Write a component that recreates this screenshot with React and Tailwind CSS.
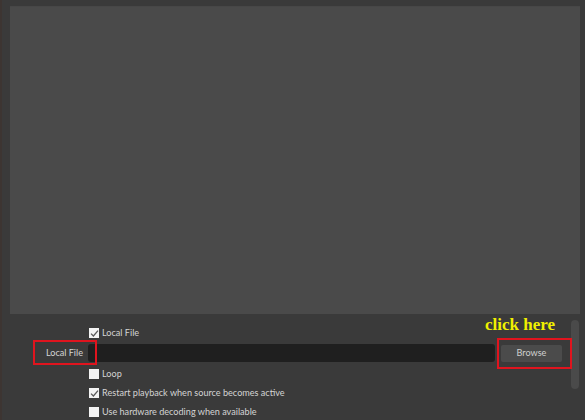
import React from "react";

function Check({ checked }) {
  return (
    <div className="w-[10px] h-[10px] bg-[#f3f3f3] flex items-center justify-center shrink-0">
      {checked && (
        <svg width="9" height="9" viewBox="0 0 9 9">
          <path d="M1 4.6 L3.4 7 L8 1.6" fill="none" stroke="#5a5a5a" strokeWidth="1.3" />
        </svg>
      )}
    </div>
  );
}

function CheckRow({ checked, label, mt }) {
  return (
    <div className={`flex items-center h-[18px] pl-[89px] gap-[3px] ${mt}`}>
      <Check checked={checked} />
      <span className="text-[#d4d4d4]">{label}</span>
    </div>
  );
}

export default function App() {
  return (
    <div
      className="relative w-[585px] h-[420px] bg-[#3a3a3a] overflow-hidden flex flex-col text-[9.1px]"
      style={{ fontFamily: 'Lato, "Open Sans", sans-serif' }}
    >
      <div className="absolute left-0 top-0 w-[2px] h-full bg-[#3d3532]" />
      <div className="mt-[6px] ml-[10px] w-[570px] h-[308px] bg-[#4a4a4a] border-t border-[#474747] shrink-0" />
      <div className="flex flex-1">
        <div className="flex flex-col flex-1 pt-[10px]">
          <CheckRow checked label="Local File" mt="" />
          <div className="flex items-center h-[18px] mt-[2px]">
            <div className="w-[83px] text-right text-[#d4d4d4] pr-0">Local File</div>
            <div className="ml-[5px] w-[407px] h-[18px] bg-[#1f1f1f] rounded-[3px]" />
            <div className="ml-[6px] w-[61px] h-[17px] bg-[#4b4b4b] rounded-[2px] flex items-center justify-center text-[#d0d0d0]">
              Browse
            </div>
          </div>
          <CheckRow label="Loop" mt="mt-[3px]" />
          <CheckRow checked label="Restart playback when source becomes active" mt="mt-[1px]" />
          <CheckRow label="Use hardware decoding when available" mt="mt-[1px]" />
        </div>
        <div className="w-[14px] pt-[6px] pr-[6px]">
          <div className="w-[8px] h-[69px] bg-[#4a4a4a] rounded-[4px]" />
        </div>
      </div>

      <div className="absolute left-[33px] top-[340px] w-[64px] h-[25px] border-2 border-[#e0141e]" />
      <div className="absolute left-[497px] top-[338px] w-[75px] h-[31px] border-[2.5px] border-[#e0141e]" />
      <div
        className="absolute left-[485px] top-[316px] text-[17px] font-bold text-[#f0f000] leading-none"
        style={{ fontFamily: '"Liberation Serif", serif' }}
      >
        click here
      </div>
    </div>
  );
}
